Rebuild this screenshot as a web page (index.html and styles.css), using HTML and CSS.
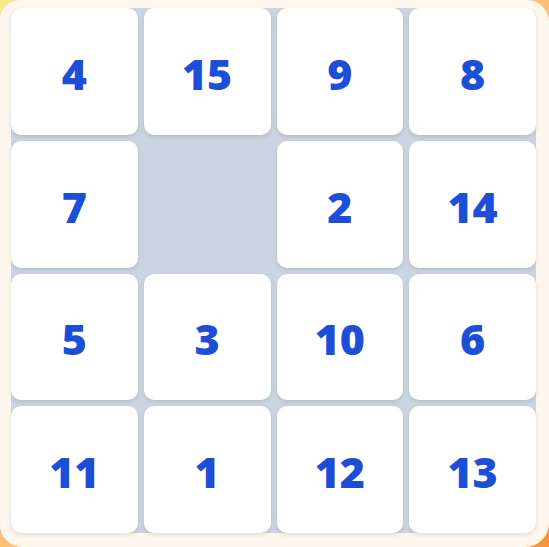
FILE: index.html
```html
<!DOCTYPE html>
<html lang="en">
<head>
    <meta charset="UTF-8">
    <meta name="viewport" content="width=device-width, initial-scale=1.0">
    <title>15 Puzzle</title>
    <link rel="stylesheet" href="styles.css">
</head>
<body>

    <div class="board">
        <div class="grid" id="grid"></div>
    </div>

    <script>
        // 0 marks the empty slot
        let tiles = [4, 15, 9, 8, 7, 0, 2, 14, 5, 3, 10, 6, 11, 1, 12, 13];

        function drawBoard() {
            let grid = document.getElementById("grid");
            grid.innerHTML = "";
            tiles.forEach(value => {
                let cell = document.createElement("div");
                if (value === 0) {
                    cell.className = "tile empty";
                } else {
                    cell.className = "tile";
                    cell.innerText = value;
                }
                grid.appendChild(cell);
            });
        }

        drawBoard();
    </script>

</body>
</html>
```

FILE: styles.css
```css
html, body { margin: 0; height: 100%; }
body { background: linear-gradient(135deg, #fde68a 0%, #fdba74 55%, #fb923c 100%); overflow: hidden; }
.board { box-sizing: border-box; width: 549px; height: 547px; padding: 8px 13px 14px 11px; background: #fff7ed; border-radius: 20px 22px 24px 22px; }
.grid { display: grid; grid-template-columns: repeat(4, 1fr); grid-template-rows: repeat(4, 1fr); gap: 6px; width: 525px; height: 525px; background: #cbd5e1; border-radius: 10px; }
.tile { display: flex; align-items: center; justify-content: center; padding-top: 4px; box-sizing: border-box; background: white; border-radius: 10px; box-shadow: 0 2px 4px rgba(15, 23, 42, 0.12); font-family: "Open Sans", "Noto Sans", sans-serif; font-weight: 800; font-size: 43px; color: #1d4ed8; }
.tile.empty { background: transparent; box-shadow: none; }
```
